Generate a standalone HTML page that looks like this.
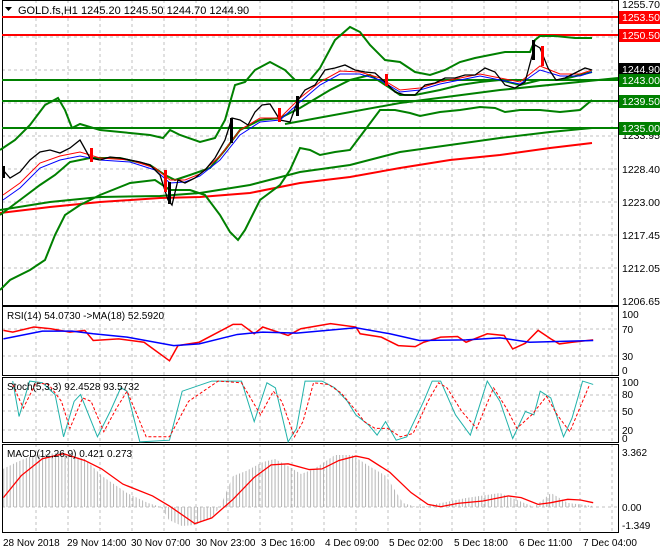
<!DOCTYPE html>
<html><head><meta charset="utf-8"><style>
html,body{margin:0;padding:0;background:#fff;width:660px;height:550px;overflow:hidden}
svg{display:block;font-family:"Liberation Sans",sans-serif}
</style></head><body>
<svg width="660" height="550" viewBox="0 0 660 550">
<defs>
<pattern id="hb" width="3.23" height="10" patternUnits="userSpaceOnUse"><rect x="0" y="0" width="1" height="10" fill="#b4b4b4"/></pattern>
</defs>
<rect width="660" height="550" fill="#fff"/>
<g stroke="#c0c0c0" stroke-dasharray="3,3" stroke-width="1">
<path d="M36 0V532M68 0V532M100 0V532M132 0V532M164 0V532M196 0V532M228 0V532M260 0V532M292 0V532M324 0V532M356 0V532M388 0V532M420 0V532M452 0V532M484 0V532M516 0V532M548 0V532M580 0V532M612 0V532"/>
<path d="M2 37H618M2 70H618M2 103H618M2 136H618M2 169H618M2 202H618M2 235H618M2 268H618"/>
<path d="M2 329H618M2 356H618M2 395H618M2 411H618M2 430H618M2 507H618"/>
</g>
<g fill="none" stroke="#000" stroke-width="1">
<rect x="2.5" y="0.5" width="616" height="305"/>
<rect x="2.5" y="306.5" width="616" height="69"/>
<rect x="2.5" y="377.5" width="616" height="65"/>
<rect x="2.5" y="444.5" width="616" height="88"/>
</g>
<g stroke-width="2">
<path d="M2 17H618M2 35H618" stroke="#ff0000"/>
<path d="M2 80H618M2 101H618M2 128H618" stroke="#008000"/>
</g>
<polyline fill="none" stroke="#ff0000" stroke-width="2" points="0,213 50,207 100,202 160,198 200,197 250,193 300,183 350,177 400,168 450,160 500,155 550,148 592,143"/>
<polyline fill="none" stroke="#008000" stroke-width="2" points="0,210 50,202 100,197 160,196 200,193 250,185 300,172 350,165 400,152 450,145 500,138 550,132 592,128"/>
<g fill="none" stroke="#008000" stroke-width="2">
<polyline points="0,150 15,140 30,125 45,105 58,98 65,110 72,128 80,124 100,130 130,133 150,135 163,138 170,130 180,135 200,142 215,138 225,120 235,85 245,82 255,70 270,62 285,70 295,80 310,80 320,68 335,40 350,27 360,32 370,45 385,60 400,62 415,72 430,75 445,70 460,62 475,58 490,55 505,52 530,52 535,40 540,36 555,36 575,38 592,38"/>
<polyline points="0,290 10,280 30,270 45,260 55,235 65,215 80,205 100,195 130,183 155,180 170,190 190,190 205,195 220,215 230,232 238,240 245,230 260,200 280,185 290,170 300,148 310,150 320,155 335,152 350,150 365,130 380,110 395,110 410,113 420,116 440,112 460,110 480,107 495,108 505,112 520,110 540,110 560,112 580,110 592,100"/>
<polyline points="0,215 20,200 40,185 55,175 70,162 90,158 120,158 150,165 165,175 175,180 190,175 210,168 225,150 240,130 260,120 280,118 300,108 330,90 350,80 370,75 390,88 400,95 415,95 440,90 460,85 480,82 500,80 520,85 540,80 560,80 592,72"/>
<polyline points="285,124 400,103 500,90 618,78"/>
</g>
<polyline fill="none" stroke="#0000ff" stroke-width="1" points="3,200 20,188 40,168 60,160 80,156 100,160 130,162 155,170 170,183 185,182 200,176 220,160 240,135 260,122 280,120 300,102 320,85 340,74 360,74 380,80 400,92 420,90 440,84 460,80 480,76 500,80 520,84 540,70 560,76 580,76 592,72"/>
<polyline fill="none" stroke="#ff0000" stroke-width="1" points="3,195 20,183 40,163 60,156 80,152 100,158 130,160 155,168 170,180 185,180 200,174 220,156 240,130 260,118 280,118 300,98 320,82 340,71 360,72 380,78 400,90 420,88 440,82 460,78 480,74 500,78 520,82 540,66 560,74 580,74 592,70"/>
<polyline fill="none" stroke="#000" stroke-width="1.3" points="3,170 10,178 20,172 30,160 40,152 50,150 60,153 70,148 80,140 90,158 100,160 110,157 120,158 130,160 140,162 150,165 160,175 168,200 172,205 178,180 185,183 195,178 205,170 215,158 225,140 232,118 240,120 248,125 255,112 262,105 270,104 280,120 290,122 298,100 305,90 315,85 325,70 335,68 345,65 355,70 365,72 375,73 385,82 395,92 405,95 415,95 425,85 435,83 445,78 455,78 465,75 475,75 485,68 495,72 505,85 515,88 525,82 535,45 540,48 548,68 556,80 565,78 575,73 585,68 592,70"/>
<g fill="#000"><rect x="2" y="166" width="3" height="12"/><rect x="168" y="182" width="3" height="22"/><rect x="230" y="118" width="3" height="25"/><rect x="296" y="96" width="3" height="20"/><rect x="532" y="40" width="3" height="20"/></g>
<g fill="#ff0000"><rect x="90" y="148" width="3" height="14"/><rect x="164" y="170" width="3" height="22"/><rect x="278" y="108" width="3" height="14"/><rect x="385" y="74" width="3" height="12"/><rect x="541" y="46" width="3" height="20"/></g>
<path d="M5 7h7l-3.5 4z" fill="#000"/>
<text x="18" y="14" font-size="11" fill="#000">GOLD.fs,H1  1245.20 1245.50 1244.70 1244.90</text>
<g font-size="10.5" fill="#000">
<text x="622" y="8">1255.70</text>
<text x="622" y="139">1233.95</text>
<text x="622" y="173">1228.40</text>
<text x="622" y="206">1223.00</text>
<text x="622" y="239">1217.45</text>
<text x="622" y="272">1212.05</text>
<text x="622" y="305">1206.65</text>
</g>
<rect x="619" y="11" width="41" height="13" fill="#ff0000"/><text x="622" y="21" font-size="10.5" fill="#fff">1253.50</text>
<rect x="619" y="29" width="41" height="13" fill="#ff0000"/><text x="622" y="39" font-size="10.5" fill="#fff">1250.50</text>
<rect x="619" y="63" width="41" height="13" fill="#000"/><text x="622" y="73" font-size="10.5" fill="#fff">1244.90</text>
<rect x="619" y="74" width="41" height="13" fill="#008000"/><text x="622" y="84" font-size="10.5" fill="#fff">1243.00</text>
<rect x="619" y="95" width="41" height="13" fill="#008000"/><text x="622" y="105" font-size="10.5" fill="#fff">1239.50</text>
<rect x="619" y="122" width="41" height="13" fill="#008000"/><text x="622" y="132" font-size="10.5" fill="#fff">1235.00</text>
<g transform="translate(0,300) scale(0.4237,0.3378)" fill="none" stroke-width="1.5">
<polyline vector-effect="non-scaling-stroke" stroke="#ff0000" points="8,90 30,95 80,80 120,85 165,95 200,90 220,120 280,115 340,125 400,180 420,135 470,125 550,72 570,72 600,100 620,80 680,105 710,85 780,70 840,80 850,100 900,110 940,135 980,138 1000,125 1040,110 1080,108 1100,125 1150,100 1190,105 1210,145 1240,128 1270,90 1300,115 1320,130 1350,125 1400,118"/>
<polyline vector-effect="non-scaling-stroke" stroke="#0000ff" points="8,115 100,92 170,92 220,100 300,110 410,135 470,130 560,102 620,95 700,98 840,82 920,100 990,120 1100,118 1180,112 1250,125 1400,120"/>
</g>
<text x="7" y="319" font-size="10" fill="#000">RSI(14) 54.0730  -&gt;MA(18) 52.5920</text>
<g font-size="10" fill="#000"><text x="622" y="318">100</text><text x="622" y="333">70</text><text x="622" y="360">30</text><text x="622" y="374">0</text></g>
<g transform="translate(0,300) scale(0.4237,0.3378)" fill="none" stroke-width="1">
<polyline vector-effect="non-scaling-stroke" stroke="#20b2aa" points="30,240 45,345 70,240 100,245 130,280 150,405 175,300 190,280 230,405 260,330 285,260 300,270 330,420 400,415 430,270 500,240 570,240 600,360 630,245 650,260 680,420 700,380 720,240 760,240 790,260 820,300 840,340 870,370 890,400 910,360 935,415 960,405 1000,300 1020,240 1040,240 1075,340 1110,400 1150,240 1180,300 1210,410 1240,330 1260,340 1275,270 1300,290 1330,405 1350,350 1375,240 1400,250"/>
<polyline vector-effect="non-scaling-stroke" stroke="#ff0000" stroke-dasharray="3,2" points="30,250 55,320 85,245 115,250 145,300 165,380 195,290 215,300 245,390 275,320 300,270 345,405 400,405 445,300 515,240 570,245 615,340 645,270 665,300 695,405 715,360 740,245 775,250 805,275 835,320 860,360 885,380 915,380 945,405 975,395 1010,300 1035,245 1055,260 1090,330 1125,380 1165,260 1195,320 1220,380 1255,340 1290,285 1315,340 1345,390 1390,255"/>
</g>
<text x="7" y="390" font-size="10" fill="#000">Stoch(5,3,3) 92.4528 93.5732</text>
<g font-size="10" fill="#000"><text x="622" y="386">100</text><text x="622" y="398">80</text><text x="622" y="415">50</text><text x="622" y="434">20</text><text x="622" y="442">0</text></g>
<polygon fill="url(#hb)" points="3,507 3,469 17,462 34,455 59,453 85,459 102,476 127,493 148,503 161,507 169,520 182,526 195,525 212,517 220,507 233,476 246,471 263,462 275,459 288,466 301,474 314,469 335,455 352,455 369,466 386,476 403,503 420,508 436,504 466,498 500,493 517,500 534,507 551,493 568,503 593,506 593,507"/>
<polyline fill="none" stroke="#ff0000" stroke-width="1.3" transform="translate(0,300) scale(0.4237,0.3378)" vector-effect="non-scaling-stroke" points="8,585 50,520 100,470 150,455 200,475 240,500 290,545 360,580 400,610 460,662 500,645 550,590 600,525 640,488 680,485 730,502 760,500 800,475 840,462 870,470 920,510 970,570 1010,605 1040,612 1080,602 1140,595 1200,580 1230,585 1270,605 1300,600 1340,590 1370,592 1400,600"/>
<text x="7" y="457" font-size="10" fill="#000">MACD(12,26,9) 0.421 0.273</text>
<g font-size="10" fill="#000"><text x="622" y="456">3.362</text><text x="622" y="511">0.00</text><text x="622" y="529">-1.349</text></g>
<g font-size="10" fill="#000">
<text x="3" y="546">28 Nov 2018</text>
<text x="67" y="546">29 Nov 14:00</text>
<text x="131" y="546">30 Nov 07:00</text>
<text x="196" y="546">30 Nov 23:00</text>
<text x="261" y="546">3 Dec 16:00</text>
<text x="325" y="546">4 Dec 09:00</text>
<text x="389" y="546">5 Dec 02:00</text>
<text x="454" y="546">5 Dec 18:00</text>
<text x="519" y="546">6 Dec 11:00</text>
<text x="583" y="546">7 Dec 04:00</text>
</g>
</svg>
</body></html>
